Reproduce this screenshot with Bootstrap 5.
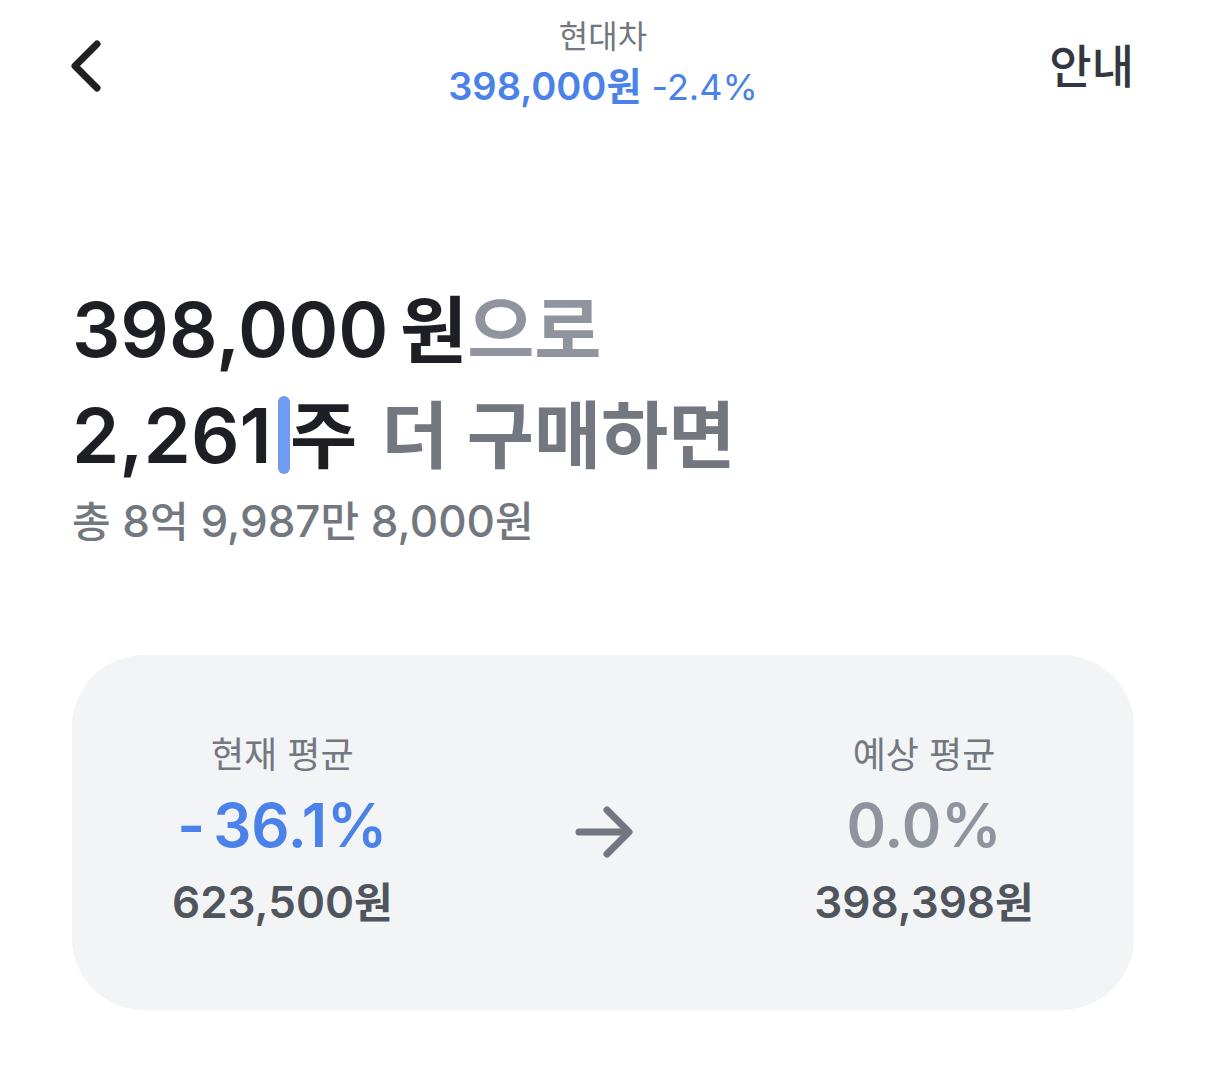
<!DOCTYPE html>
<html lang="ko">
<head>
<meta charset="utf-8">
<meta name="viewport" content="width=device-width, initial-scale=1">
<title>현대차 물타기 계산기</title>
<link rel="stylesheet" href="https://cdn.jsdelivr.net/npm/bootstrap@5.3.0/dist/css/bootstrap.min.css">
<style>
  body { font-family: Inter, "Noto Sans CJK KR", sans-serif; color: #1e1f25; background: #fff; }
  .page-pad { padding-left: 72px; padding-right: 72px; }
  .tone-blue { color: #4a82ea; }
  .tone-soft { color: #90949e; }
  .tone-gray { color: #737780; }
  .tone-dark { color: #50545c; }
  .semi { font-weight: 600; }
  .medium { font-weight: 500; }

  .top-bar { padding-top: 12px; }
  .side-slot { flex: 1 1 0; height: 108px; }
  .back-btn svg { width: 30px; height: 54px; overflow: visible; }
  .help-btn { font-size: 46px; line-height: 60px; color: #333840; }
  .stock-name { font-size: 32px; line-height: 50px; }
  .quote { font-size: 38px; line-height: 48px; }
  .quote-rate { font-size: 36px; }

  .order-form { padding-top: 156px; }
  .order-line { font-size: 76px; line-height: 106px; height: 106px; }
  .order-line .unit { font-size: 73px; }
  .order-line input { font: inherit; color: inherit; line-height: 106px; height: 106px; outline: 0; caret-color: transparent; }
  .price-field { width: 328px; }
  .count-field { width: 206px; }
  .cursor-bar { width: 12px; height: 78px; border-radius: 6px; background: #6f9bf1; }
  .gap-word { margin-left: 24px; }
  .total { font-size: 44px; line-height: 66px; }
  .total .unit { font-size: 42px; }

  .compare { margin-top: 100px; padding: 72px 100px; border-radius: 72px; background: #f2f4f6; }
  .compare-side { min-width: 220px; }
  .compare-label { font-size: 36px; line-height: 56px; }
  .compare-rate { font-size: 60px; line-height: 84px; }
  .compare-rate .sign { margin-right: 8px; }
  .compare-price { font-size: 44px; line-height: 70px; }
  .compare-price .unit { font-size: 42px; }
  .compare svg { width: 60px; height: 54px; }
</style>
<script src="https://cdn.jsdelivr.net/npm/bootstrap@5.3.0/dist/js/bootstrap.bundle.min.js" defer></script>
</head>
<body>
<header class="top-bar page-pad d-flex">
  <div class="side-slot d-flex align-items-center">
    <button type="button" class="back-btn btn p-0 border-0 d-flex" aria-label="뒤로">
      <svg viewBox="0 0 30 54" fill="none" stroke="#1f2022" stroke-width="7" stroke-linecap="round" stroke-linejoin="round"><path d="M25 5 3 27 25 49"/></svg>
    </button>
  </div>
  <div class="text-center text-nowrap">
    <div class="stock-name tone-gray">현대차</div>
    <div class="quote tone-blue"><span class="semi">398,000원</span><span class="quote-rate"> -2.4%</span></div>
  </div>
  <div class="side-slot d-flex align-items-center justify-content-end">
    <button type="button" class="help-btn medium btn p-0 border-0">안내</button>
  </div>
</header>

<main class="page-pad">
  <form class="order-form">
    <div class="order-line semi d-flex text-nowrap">
      <input id="price" class="price-field border-0 bg-transparent p-0" type="text" inputmode="numeric" value="398,000">
      <label for="price"><span class="unit">원</span><span class="unit tone-soft">으로</span></label>
    </div>
    <div class="order-line semi d-flex align-items-center text-nowrap">
      <input id="count" class="count-field border-0 bg-transparent p-0" type="text" inputmode="numeric" value="2,261">
      <span class="cursor-bar"></span>
      <label for="count"><span class="unit">주</span><span class="unit tone-gray gap-word">더 구매하면</span></label>
    </div>
    <p class="total medium tone-gray mb-0"><span class="unit">총</span> 8<span class="unit">억</span> 9,987<span class="unit">만</span> 8,000<span class="unit">원</span></p>
  </form>

  <section class="compare d-flex justify-content-between align-items-center text-center text-nowrap">
    <div class="compare-side">
      <div class="compare-label tone-gray">현재 평균</div>
      <div class="compare-rate semi tone-blue"><span class="sign">-</span>36.1%</div>
      <div class="compare-price semi tone-dark">623,500<span class="unit">원</span></div>
    </div>
    <svg viewBox="0 0 60 54" fill="none" stroke="#737780" stroke-width="7" stroke-linecap="round" stroke-linejoin="round" aria-hidden="true"><path d="M6 26H55M34 4 56 26 34 48"/></svg>
    <div class="compare-side">
      <div class="compare-label tone-gray">예상 평균</div>
      <div class="compare-rate semi tone-soft">0.0%</div>
      <div class="compare-price semi tone-dark">398,398<span class="unit">원</span></div>
    </div>
  </section>
</main>
</body>
</html>
